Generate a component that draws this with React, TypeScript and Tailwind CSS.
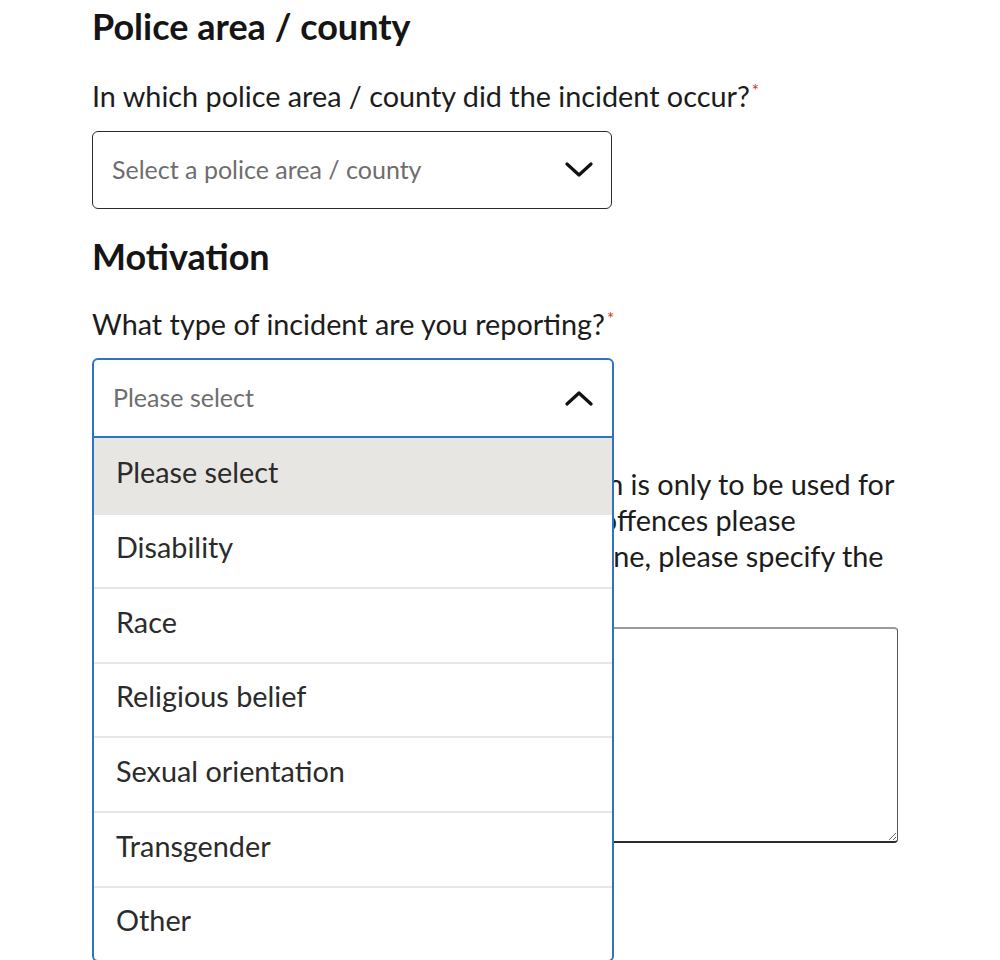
const options = [
  "Please select",
  "Disability",
  "Race",
  "Religious belief",
  "Sexual orientation",
  "Transgender",
  "Other",
];

function Required() {
  return <span className="relative -top-[10px] ml-[2px] text-[17px] text-[#d4351c]">*</span>;
}

function Chevron({ up }: { up?: boolean }) {
  return (
    <svg width="28" height="16" viewBox="0 0 28 16" fill="none" className="shrink-0">
      <polyline
        points={up ? "2,14 14,3 26,14" : "2,2 14,13 26,2"}
        stroke="#111"
        strokeWidth="3.2"
        strokeLinecap="round"
        strokeLinejoin="round"
      />
    </svg>
  );
}

export default function App() {
  return (
    <div className="min-h-[960px] bg-white font-['Lato','Noto_Sans',sans-serif] text-[#1c1c1c]">
      <div className="ml-[92px] w-[806px] pt-[6px]">
        <h2 className="text-[36px] font-bold leading-[40px] text-[#151515]">Police area / county</h2>

        <p className="mt-[35px] text-[28.8px] leading-[30px]">
          In which police area / county did the incident occur?
          <Required />
        </p>

        <div className="mt-[15px] flex h-[78px] w-[520px] items-center justify-between rounded-[6px] border-[1.5px] border-[#2b2b2b] pl-[19px] pr-[18px]">
          <span className="text-[25px] text-[#6e6e6e]">Select a police area / county</span>
          <Chevron />
        </div>

        <h2 className="mt-[27px] text-[36px] font-bold leading-[40px] text-[#151515]">Motivation</h2>

        <p className="mt-[33px] text-[28.8px] leading-[30px]">
          What type of incident are you reporting?
          <Required />
        </p>

        <div className="relative mt-[14px] w-[522px]">
          <div className="flex h-[80px] items-center justify-between rounded-t-[6px] border-2 border-[#2f74c0] pl-[19px] pr-[19px]">
            <span className="text-[25px] text-[#6e6e6e]">Please select</span>
            <Chevron up />
          </div>

          <ul className="absolute left-0 top-full z-10 w-full rounded-b-[6px] border-2 border-t-0 border-[#2f74c0] bg-white">
            {options.map((opt, i) => (
              <li
                key={opt}
                className={`flex h-[74.6px] items-center px-[22px] pb-[6px] text-[28.8px] text-[#2b2b2b] ${
                  i === 0 ? "bg-[#e8e6e2]" : "border-t-2 border-[#e6e6e3]"
                }`}
              >
                {opt}
              </li>
            ))}
          </ul>
        </div>

        <p className="mt-[28px] text-[28.8px] leading-[36px] whitespace-nowrap text-[#1c1c1c]">
          <span className="block">
            <span className="tracking-[-0.22px]">Please be aware that the hate crime optio</span>n is only to be used for
          </span>
          <span className="block">
            <span className="tracking-[-0.17px]">reporting hate crime. For non hate crime o</span>ffences please
          </span>
          <span className="block">
            <span className="tracking-[-0.48px]">contact us on 101. If you chose other or no</span>ne, please specify the
          </span>
          <span className="block">motivation below.</span>
        </p>

        <textarea
          className="mt-[17px] block h-[216px] w-[806px] resize-y rounded-[4px] border-[1.5px] border-t-2 border-t-[#9a9a9a] border-r-[#555] border-b-2 border-b-[#2b2b2b] border-l-[#555] p-3 text-[22px] outline-none"
          readOnly
        />
      </div>
    </div>
  );
}
